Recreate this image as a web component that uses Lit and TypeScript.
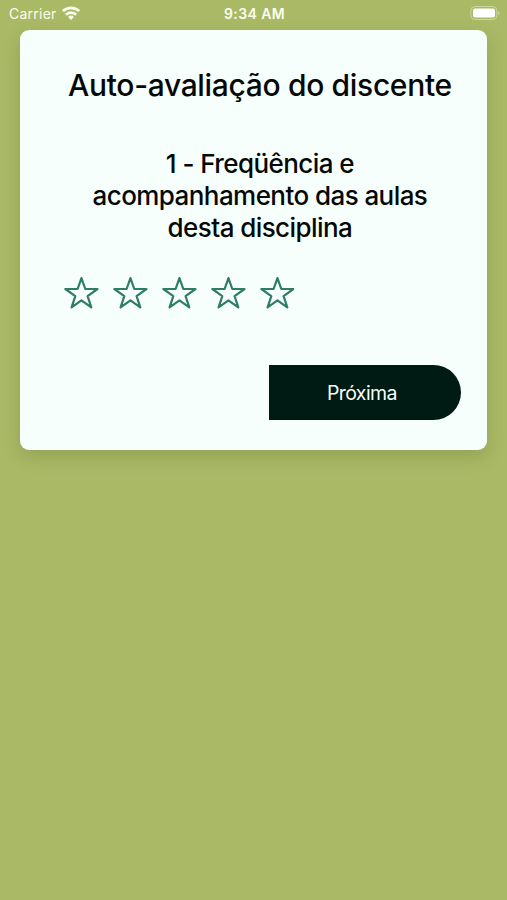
import { LitElement, html, css } from "lit";
import { customElement } from "lit/decorators.js";

@customElement("rating-star")
class RatingStar extends LitElement {
  static styles = css`
    :host { display: block; width: 34.9px; height: 34px; }
    svg { display: block; }
  `;
  render() {
    return html`<svg width="34.9" height="34" viewBox="0 0 34.9 34" fill="none" stroke="#2f7d67" stroke-width="2.2" stroke-linejoin="round">
      <path d="M17.45 2.1 21.3 13H33.5L23.6 20.1 27.3 31.4 17.45 24.4 7.6 31.4 11.3 20.1 1.4 13H13.6Z" />
    </svg>`;
  }
}

@customElement("app-root")
class AppRoot extends LitElement {
  static styles = css`
    :host {
      display: block;
      box-sizing: border-box;
      height: 900px;
      overflow: hidden;
      background: #aab965;
      font-family: Inter, "Liberation Sans", sans-serif;
      color: #050807;
    }
    .status {
      display: grid;
      grid-template-columns: 1fr auto 1fr;
      align-items: center;
      height: 30px;
      padding: 0 7px 3px 9px;
      box-sizing: border-box;
      color: #fbfdf0;
      font-size: 14px;
      line-height: 17px;
    }
    .carrier { display: flex; align-items: center; gap: 5px; letter-spacing: 0.25px; }
    .carrier svg { margin-top: -1px; }
    .time { font-weight: 600; font-size: 14px; letter-spacing: 0.4px; padding-bottom: 1px; }
    .battery { justify-self: end; margin-top: -1px; }
    svg { display: block; }
    .card {
      box-sizing: border-box;
      width: 467px;
      height: 420px;
      margin: 0 0 0 20.4px;
      padding: 37px 26.5px 0 43.6px;
      border-radius: 9px;
      background: #f6fffc;
      box-shadow: 0 7px 18px rgba(60, 80, 30, 0.2);
    }
    h1, h2 { margin: 0; font-weight: 450; text-align: center; white-space: nowrap; }
    h1 { font-size: 30px; line-height: 36px; letter-spacing: -0.33px; margin: 0 -3px 0 -8px; }
    h2 { margin-top: 45px; font-size: 26px; line-height: 32px; letter-spacing: -0.57px; padding-right: 5px; }
    .stars { display: flex; gap: 14px; margin-top: 32px; }
    .next {
      display: block;
      width: 192px;
      height: 55px;
      margin: 55px 0 0 auto;
      padding: 1px 6px 0 0;
      border: 0;
      border-radius: 0 27.5px 27.5px 0;
      background: #001a14;
      color: #f6fffc;
      font: 400 19.5px Inter, "Liberation Sans", sans-serif;
      letter-spacing: -0.6px;
    }
  `;
  render() {
    return html`
      <div class="status">
        <div class="carrier">
          <span>Carrier</span>
          <svg width="18" height="14" viewBox="0 0 18 14" fill="none" stroke="#fbfdf0" stroke-width="2.7">
            <path d="M.9 5.1a11.6 11.6 0 0 1 16.2 0M3.9 8.7a7.2 7.2 0 0 1 10.2 0" />
            <path d="M9 13.9 6.1 11a4.2 4.2 0 0 1 5.8 0Z" fill="#fbfdf0" stroke="none" />
          </svg>
        </div>
        <span class="time">9:34 AM</span>
        <svg class="battery" width="30" height="14" viewBox="0 0 30 14">
          <rect x=".9" y=".5" width="26" height="13" rx="4" fill="none" stroke="#cdd7a2" />
          <rect x="3" y="2.5" width="22" height="9" rx="2" fill="#fff" />
          <path d="M28.3 5a2.3 2.3 0 0 1 0 4Z" fill="#cdd7a2" />
        </svg>
      </div>
      <main class="card">
        <h1>Auto-avaliação do discente</h1>
        <h2>1 - Freqüência e<br />acompanhamento das aulas<br />desta disciplina</h2>
        <div class="stars">${[1, 2, 3, 4, 5].map(() => html`<rating-star></rating-star>`)}</div>
        <button class="next">Próxima</button>
      </main>
    `;
  }
}
